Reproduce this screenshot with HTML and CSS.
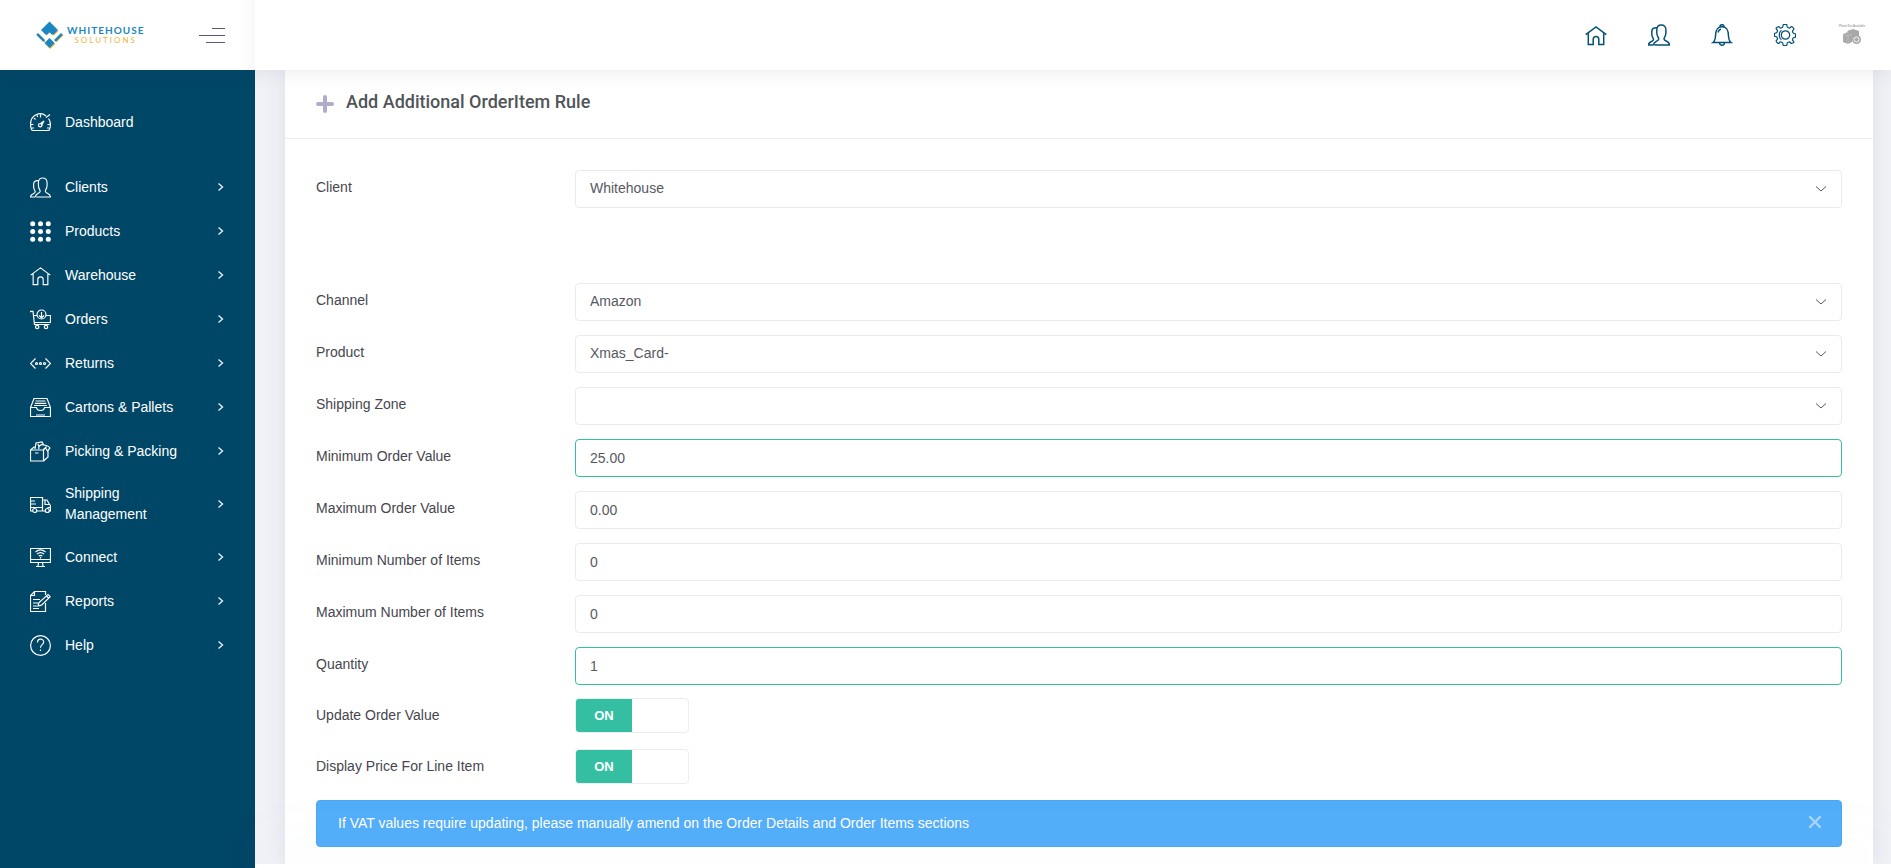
FILE: index.html
```html
<!DOCTYPE html>
<html lang="en">
<head>
<meta charset="utf-8">
<title>Add Additional OrderItem Rule</title>
<link rel="stylesheet" href="styles.css">
</head>
<body>
<svg class="sprite" aria-hidden="true">
  <symbol id="i-home" viewBox="0 0 22 22"><path d="M.7 10.600 11 3l10.300 7.600M3.300 9.500v11h4.900v-5.200a2.800 2.800 0 0 1 5.600 0v5.200h4.900v-11"/></symbol>
  <symbol id="i-users" viewBox="0 0 22 22"><path d="M6.500 21H21.500c0-4.500-5.500-3.500-5.500-6 0-1.500 1.900-2.700 1.900-6.300V5.900C17.900 2.700 16 1 13.300 1S8.800 2.700 8.800 5.900v2.800c0 3.600 1.900 4.800 1.900 6.300 0 2.500-5 1.800-5.100 6M5.600 21H.5c0-4 5-3 5-5.500 0-1.300-1.700-2.500-1.700-5.200V7.600C3.800 5 5.200 3.600 8.900 3.800"/></symbol>
  <symbol id="i-chevron" viewBox="0 0 8 10"><path d="m1.500 1.500 4 3.500-4 3.500"/></symbol>
  <symbol id="i-caret" viewBox="0 0 12 6"><path d="m1 .5 5 4.500 5-4.500"/></symbol>
</svg>

<header class="topbar">
  <div class="brand">
    <a class="logo" href="#" aria-label="Whitehouse Solutions">
      <svg class="logo-mark" viewBox="0 0 28 28">
        <path fill="#edb53b" d="m10.500 14.500 3.500-3.500 4 3.500 5-5-4 1-5-1-5 1zM14.300 18l5 5-5 5-5-5zM2.800 13l7 7-1.500 1.500-7-7zM26 13l1.500 1.300-7 7-1.800-1.800z"/>
        <path fill="#1b86c1" d="M13.500.5 22 9l-4.500 4.500-1.500.3-2.500-2.500-2.500 2.500-1.500-.3L5 9zM13.500 17l5 5-5 5-5-5zM2 12l7 7-1.800 1.800-7-7zM25 12l1.800 1.800-7 7-1.800-1.800z"/>
      </svg>
      <span class="logo-text"><span class="logo-top">WHITEHOUSE</span><span class="logo-bottom">SOLUTIONS</span></span>
    </a>
    <button class="menu-toggle" type="button" aria-label="Toggle menu"><svg class="menu-bars" viewBox="0 0 26 16"><path d="M13 1.500h13M0 8.500h26M7 15.500h19"/></svg></button>
  </div>
  <nav class="tools" aria-label="Account">
    <a href="#" aria-label="Home"><svg class="tool-icon"><use href="#i-home"/></svg></a>
    <a href="#" aria-label="Users"><svg class="tool-icon"><use href="#i-users"/></svg></a>
    <a href="#" aria-label="Notifications"><svg class="tool-icon" viewBox="0 0 22 22"><path d="M2 18.500h18c-2-1.500-2.300-3-2.500-6.500C17.300 6 16 2.800 11 2.800S4.700 6 4.500 12c-.2 3.500-.5 5-2.500 6.500zM9 2.800C9 0 13 0 13 2.800M8.500 19c.5 3 4.500 3 5 0M7 8.500C7.400 6.500 8.500 5.500 10 5.200"/></svg></a>
    <a href="#" aria-label="Settings"><svg class="tool-icon tool-gear" viewBox="0 0 22 22"><path d="M8.300 3.500Q9 3.200 9 1.500q0-1 1-1h2q1 0 1 1 0 1.700.7 2l1.200.5q.8.200 1.900-1 .8-.7 1.500 0l1.200 1.200q.7.700 0 1.500-1.200 1.100-1 1.900l.5 1.200q.3.700 1.500.7 1 0 1 1v2q0 1-1 1-1.200 0-1.500.7l-.5 1.200q-.2.800 1 1.900.7.800 0 1.500L18.300 19q-.7.700-1.500 0-1.100-1.200-1.900-1l-1.200.5q-.7.300-.7 2 0 1-1 1h-2q-1 0-1-1 0-1.700-.7-2L7.100 18q-.8-.2-1.900 1-.8.700-1.500 0l-1.200-1.200q-.7-.7 0-1.500 1.200-1.100 1-1.900L3 13.200q-.3-.7-1.500-.7-1 0-1-1v-1.500q0-1 1-1 1.200 0 1.500-.7l.5-1.200q.2-.8-1-1.900-.7-.8 0-1.500L3.700 3q.7-.7 1.500 0 1.100 1.200 1.900 1z"/><circle cx="11.500" cy="11" r="4.200"/><path d="M7.500 6.200c-3 2.200-3 7.400 0 9.600"/></svg></a>
    <a href="#" aria-label="Profile"><svg class="avatar" viewBox="0 0 30 24"><text class="avatar-text" x="15" y="4" text-anchor="middle">Photo Not Available</text><g fill="#a9a9a9"><path d="m6 11 5-2 4 2v8l-4 2-5-2z"/><path d="m10 8 6-2 6 2v6l-5 4-3-6z"/><circle cx="19.500" cy="16.500" r="4.500"/></g><path d="m6 11 5 2 4-2M11 13v8" fill="none" stroke="#ccc" stroke-width=".6"/><circle cx="19.500" cy="16.500" r="2.500" fill="none" stroke="#fff" stroke-width=".9"/></svg></a>
  </nav>
</header>

<div class="shell">
  <nav class="sidebar" aria-label="Main">
    <a class="nav-item nav-first" href="#"><svg class="nav-icon" viewBox="0 0 21 21"><path d="M2 18.500h17c1-2 1.500-4 1.500-6 0-2.500-.8-4.500-2-6M16 4C10-1 .5 3 .5 12.500c0 2 .5 4 1.500 6M10.500 2.500v3M4 6l1.500 1.500M1 12.500h2.500M17.500 12.500H20M2 16h2M17 16h2M7 3.200l.7 1.800M16 5.500l4-3M10 12l4-3-2.500 4.500"/><circle cx="10.200" cy="13.200" r="1.700"/></svg><span class="nav-label">Dashboard</span></a>
    <a class="nav-item" href="#"><svg class="nav-icon"><use href="#i-users"/></svg><span class="nav-label">Clients</span><svg class="nav-arrow"><use href="#i-chevron"/></svg></a>
    <a class="nav-item" href="#"><svg class="nav-icon nav-dots" viewBox="0 0 21 21"><circle cx="2.700" cy="2.700" r="2.500"/><circle cx="10.500" cy="2.700" r="2.500"/><circle cx="18.300" cy="2.700" r="2.500"/><circle cx="2.700" cy="10.500" r="2.500"/><circle cx="10.500" cy="10.500" r="2.500"/><circle cx="18.300" cy="10.500" r="2.500"/><circle cx="2.700" cy="18.300" r="2.500"/><circle cx="10.500" cy="18.300" r="2.500"/><circle cx="18.300" cy="18.300" r="2.500"/></svg><span class="nav-label">Products</span><svg class="nav-arrow"><use href="#i-chevron"/></svg></a>
    <a class="nav-item" href="#"><svg class="nav-icon"><use href="#i-home"/></svg><span class="nav-label">Warehouse</span><svg class="nav-arrow"><use href="#i-chevron"/></svg></a>
    <a class="nav-item" href="#"><svg class="nav-icon" viewBox="0 0 21 21"><path d="M0 3.500V2.300h3L4.500 15.500h15M3.500 6.500H7M16 6.500h4.500v7h-16M11.500 3v6M9 6.500l2.500 2.500L14 6.500"/><circle cx="11.500" cy="5.500" r="4.500"/><circle cx="7.200" cy="18" r="1.700"/><circle cx="16" cy="18" r="1.700"/></svg><span class="nav-label">Orders</span><svg class="nav-arrow"><use href="#i-chevron"/></svg></a>
    <a class="nav-item" href="#"><svg class="nav-icon" viewBox="0 0 21 21"><path d="m5.500 5.500-5 5 5 5M15.500 5.500l5 5-5 5"/><circle cx="6.500" cy="10.500" r="1"/><circle cx="10.500" cy="10.500" r="1"/><circle cx="14.500" cy="10.500" r="1"/></svg><span class="nav-label">Returns</span><svg class="nav-arrow"><use href="#i-chevron"/></svg></a>
    <a class="nav-item" href="#"><svg class="nav-icon" viewBox="0 0 21 21"><path d="M.5 10.500v9h20v-9h-6c-.5 4-7.500 4-8 0zL4 1.500h13l3.500 9M5.500 4h10M4.800 6.300h11.500M4 8.500h13M6 18h9"/></svg><span class="nav-label">Cartons &amp; Pallets</span><svg class="nav-arrow"><use href="#i-chevron"/></svg></a>
    <a class="nav-item" href="#"><svg class="nav-icon" viewBox="0 0 21 21"><path d="M.5 9h13v11H.5zL4 6h2M13.500 9l3-3.500M13.500 20l4.500-4V9.500M5 12h3.500M5 8 6 2l6-1 1.500 2.500M9 8c-1-3 2-5 5-4s4 0 6 3l-2.500 3-2-3-2 1M8 3l1 3"/></svg><span class="nav-label">Picking &amp; Packing</span><svg class="nav-arrow"><use href="#i-chevron"/></svg></a>
    <a class="nav-item" href="#"><svg class="nav-icon" viewBox="0 0 21 21"><path d="M2.500 17h-2V3.500h12V17H7M0 7h5M0 10h6M.5 13.500h12M12.500 6h4.500l2.500 4.500 1 1V17h-1M15.500 17h-3M15 6v4.500h4.500M17.500 13.500h3"/><circle cx="4.700" cy="16.500" r="2"/><circle cx="17.300" cy="16.500" r="2"/></svg><span class="nav-label">Shipping Management</span><svg class="nav-arrow"><use href="#i-chevron"/></svg></a>
    <a class="nav-item" href="#"><svg class="nav-icon" viewBox="0 0 21 21"><path d="M.5 1.500h20v14H.5zM.5 12.500h20M8.500 15.500 8 19M12.500 15.500l.5 3.500M6 19.500h9M5.500 5c3-2.500 7-2.500 10 0M7 7c2-1.700 5-1.700 7 0M8.700 9c1-.8 2.600-.8 3.600 0M10.500 10v1.500"/></svg><span class="nav-label">Connect</span><svg class="nav-arrow"><use href="#i-chevron"/></svg></a>
    <a class="nav-item" href="#"><svg class="nav-icon" viewBox="0 0 21 21"><path d="M15.500 4V.500h-11L.5 4.500v16h15V12M4.500.500v4h-4M3 8.500h7M3 12h5M3 15h4M3 17.500h6M8 15l1-3.500 9-8 2.200 2.200-8.700 8.500zM16.500 5l2 2"/></svg><span class="nav-label">Reports</span><svg class="nav-arrow"><use href="#i-chevron"/></svg></a>
    <a class="nav-item" href="#"><svg class="nav-icon" viewBox="0 0 21 21"><circle cx="10.500" cy="10.500" r="9.900"/><path d="M7.500 7.500c0-4.500 6.200-4.300 6.200-.5 0 2.500-3.200 2.800-3.200 5.700M10.500 14.500V16"/></svg><span class="nav-label">Help</span><svg class="nav-arrow"><use href="#i-chevron"/></svg></a>
  </nav>

  <div class="page">
    <main class="content">
      <section class="card">
        <div class="card-head">
          <svg class="plus" viewBox="0 0 18 18"><path d="M9 2v14M2 9h14"/></svg>
          <h1 class="card-title">Add Additional OrderItem Rule</h1>
        </div>
        <form class="card-body">
          <div class="row row-client"><label class="row-label" for="client">Client</label><div class="select-wrap"><select class="field" id="client"><option>Whitehouse</option></select><svg class="caret"><use href="#i-caret"/></svg></div></div>
          <div class="row"><label class="row-label" for="channel">Channel</label><div class="select-wrap"><select class="field" id="channel"><option>Amazon</option></select><svg class="caret"><use href="#i-caret"/></svg></div></div>
          <div class="row"><label class="row-label" for="product">Product</label><div class="select-wrap"><select class="field" id="product"><option>Xmas_Card-</option></select><svg class="caret"><use href="#i-caret"/></svg></div></div>
          <div class="row"><label class="row-label" for="zone">Shipping Zone</label><div class="select-wrap"><select class="field" id="zone"><option></option></select><svg class="caret"><use href="#i-caret"/></svg></div></div>
          <div class="row"><label class="row-label" for="min-value">Minimum Order Value</label><input class="field field-valid" id="min-value" type="text" value="25.00"></div>
          <div class="row"><label class="row-label" for="max-value">Maximum Order Value</label><input class="field" id="max-value" type="text" value="0.00"></div>
          <div class="row"><label class="row-label" for="min-items">Minimum Number of Items</label><input class="field" id="min-items" type="text" value="0"></div>
          <div class="row"><label class="row-label" for="max-items">Maximum Number of Items</label><input class="field" id="max-items" type="text" value="0"></div>
          <div class="row"><label class="row-label" for="quantity">Quantity</label><input class="field field-valid" id="quantity" type="text" value="1"></div>
          <div class="switches">
            <div class="row"><label class="switch-label" for="update-value">Update Order Value</label><label class="switch"><input class="switch-input" id="update-value" type="checkbox" checked><span class="switch-on">ON</span></label></div>
            <div class="row"><label class="switch-label" for="display-price">Display Price For Line Item</label><label class="switch"><input class="switch-input" id="display-price" type="checkbox" checked><span class="switch-on">ON</span></label></div>
          </div>
          <div class="alert" role="alert"><span>If VAT values require updating, please manually amend on the Order Details and Order Items sections</span><button class="alert-close" type="button" aria-label="Close"><svg class="close-icon" viewBox="0 0 14 14"><path d="m2 2 10 10M12 2 2 12"/></svg></button></div>
        </form>
      </section>
    </main>
    <footer class="footer"></footer>
  </div>
</div>
</body>
</html>
```

FILE: styles.css
```css
* {
  box-sizing: border-box;
}

body {
  margin: 0;
  min-height: 100vh;
  display: flex;
  flex-direction: column;
  overflow: hidden;
  background: #f1f2f7;
  color: #46464e;
  font: 14px/21px "Liberation Sans", Arial, sans-serif;
}

a {
  color: inherit;
  text-decoration: none;
}

.sprite {
  display: none;
}

/* Top bar */
.topbar {
  display: flex;
  height: 70px;
  background: #fff;
  box-shadow: 0 0 20px rgba(60, 60, 70, .12);
  position: relative;
  z-index: 2;
}

.brand {
  width: 255px;
  padding: 0 30px 0 36px;
  display: flex;
  align-items: center;
  justify-content: space-between;
  background: linear-gradient(to left, #f8f8f8, #fff 16px);
}

.logo {
  display: flex;
  align-items: center;
  gap: 3px;
}

.logo-mark {
  width: 28px;
  height: 28px;
}

.logo-text {
  display: flex;
  flex-direction: column;
  align-items: center;
  font-family: Lato, sans-serif;
  line-height: 10px;
}

.logo-top {
  color: #1b86c1;
  font-size: 10px;
  font-weight: 700;
  letter-spacing: 1px;
}

.logo-bottom {
  color: #edb53b;
  font-size: 8px;
  letter-spacing: 2px;
}

.menu-toggle {
  padding: 0;
  border: 0;
  background: none;
  display: flex;
}

.menu-bars {
  width: 26px;
  height: 16px;
  fill: none;
  stroke: #5d5678;
}

.tools {
  flex: 1;
  display: flex;
  align-items: center;
  justify-content: flex-end;
  gap: 41px;
  padding-right: 24px;
}

.tools a {
  display: flex;
}

.tool-icon {
  width: 22px;
  height: 22px;
  fill: none;
  stroke: #045174;
  stroke-width: 1.5;
}

.tool-gear {
  stroke-width: 1.2;
}

.avatar {
  width: 30px;
  height: 24px;
}

.avatar-text {
  font: 3px "Liberation Sans", Arial, sans-serif;
  fill: #888;
}

/* Shell */
.shell {
  flex: 1;
  display: flex;
}

.sidebar {
  width: 255px;
  padding-top: 30px;
  background: #004667;
  color: #fff;
}

.nav-item {
  min-height: 44px;
  padding: 10px 30px;
  display: flex;
  align-items: center;
}

.nav-first {
  margin-bottom: 21px;
}

.nav-icon {
  width: 21px;
  height: 21px;
  margin-right: 14px;
  flex: none;
  fill: none;
  stroke: #fff;
  stroke-width: 1.2;
}

.nav-dots {
  fill: #fff;
  stroke: none;
}

.nav-label {
  width: 130px;
}

.nav-arrow {
  width: 8px;
  height: 10px;
  margin-left: auto;
  fill: none;
  stroke: #e4edf1;
  stroke-width: 1.4;
}

.page {
  flex: 1;
  display: flex;
  flex-direction: column;
}

.content {
  padding: 0 18px 0 30px;
}

.footer {
  flex: 1;
  background: #fff;
  position: relative;
  box-shadow: 0 -10px 60px rgba(183, 192, 206, .25);
}

/* Card */
.card {
  background: #fff;
  box-shadow: 0 0 20px rgba(70, 70, 110, .1);
}

.card-head {
  height: 69px;
  padding: 0 31px 4px;
  display: flex;
  align-items: center;
  gap: 12px;
  border-bottom: 1px solid #ebedf2;
}

.plus {
  width: 18px;
  height: 18px;
  margin-top: 4px;
  fill: none;
  stroke: #b0adc9;
  stroke-width: 4;
  stroke-linecap: round;
}

.card-title {
  margin: 0;
  color: #505558;
  font: 500 18px/24px Roboto, sans-serif;
}

.card-body {
  padding: 31px 31px 17px;
}

.row {
  display: grid;
  grid-template-columns: 259px 1fr;
  margin-bottom: 14px;
}

.row-client {
  margin-bottom: 75px;
}

.row-label {
  padding-top: 7px;
}

.field {
  width: 100%;
  height: 38px;
  padding: 0 14px 1px;
  border: 1px solid #ebebef;
  border-radius: 4px;
  background: #fff;
  color: #575962;
  font: inherit;
  appearance: none;
}

.field-valid {
  border-color: #34bfa3;
}

.select-wrap {
  display: grid;
  align-items: center;
}

.select-wrap .field,
.select-wrap .caret {
  grid-area: 1 / 1;
}

.caret {
  width: 12px;
  height: 6px;
  margin-right: 15px;
  justify-self: end;
  fill: none;
  stroke: #575962;
  stroke-width: 1;
  pointer-events: none;
}

.switches {
  margin-top: -1px;
}

.switches .row {
  align-items: center;
  margin-bottom: 16px;
}

.switch {
  width: 114px;
  height: 35px;
  display: flex;
  border: 1px solid #ebedf2;
  border-radius: 4px;
  background: #fff;
  overflow: hidden;
  position: relative;
}

.switch-input {
  position: absolute;
  inset: 0;
  margin: 0;
  opacity: 0;
}

.switch-on {
  width: 56px;
  background: #34bfa3;
  color: #fff;
  font-size: 13px;
  font-weight: 700;
  line-height: 33px;
  text-align: center;
}

.alert {
  min-height: 47px;
  padding: 0 19px 0 21px;
  display: flex;
  align-items: center;
  justify-content: space-between;
  border: 1px solid #48a8f6;
  border-radius: 4px;
  background: #53aef9;
  color: #fff;
}

.alert-close {
  padding: 0 0 4px;
  border: 0;
  background: none;
  display: flex;
}

.close-icon {
  width: 14px;
  height: 14px;
  fill: none;
  stroke: #a9d6fc;
  stroke-width: 2.4;
  stroke-linecap: round;
}
```
